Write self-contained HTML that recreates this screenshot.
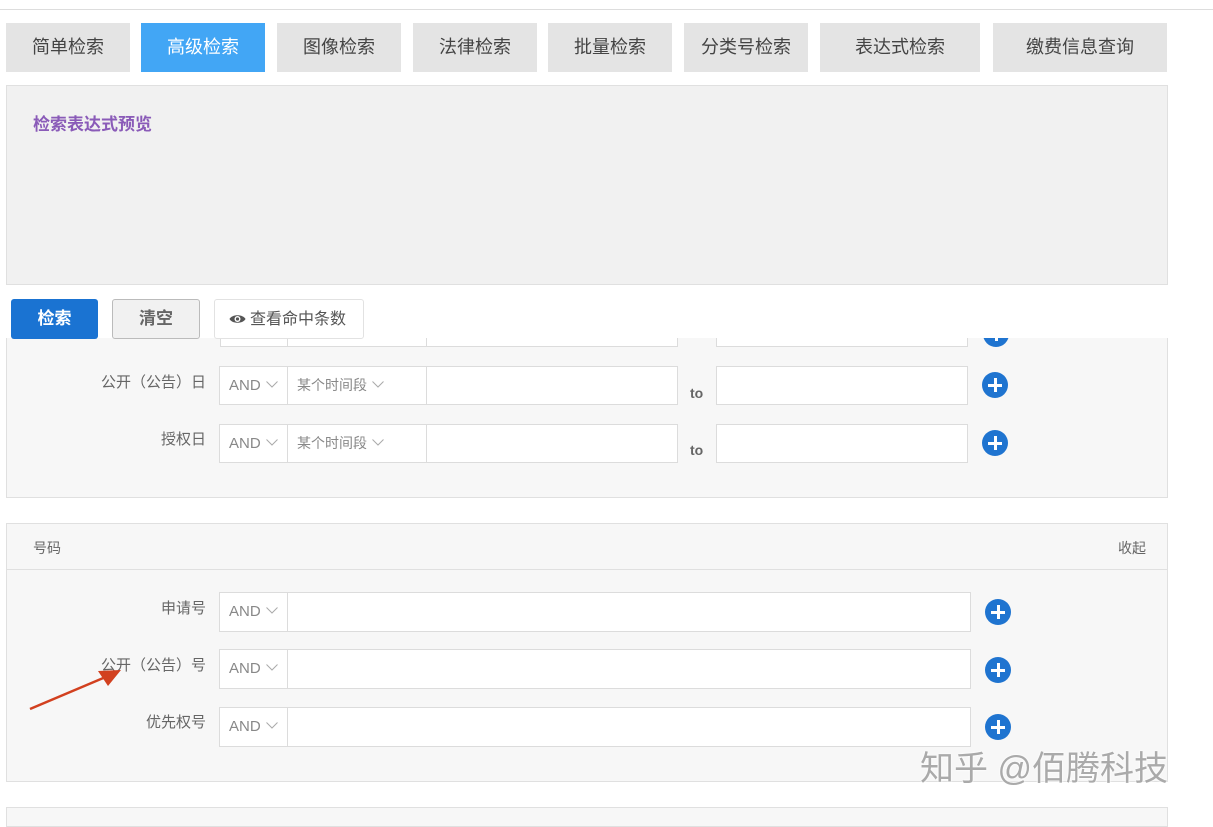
<!DOCTYPE html>
<html><head><meta charset="utf-8"><style>
*{box-sizing:border-box;margin:0;padding:0}
body{width:1213px;height:815px;overflow:hidden;background:#fff;font-family:"Liberation Sans","Noto Sans CJK SC",sans-serif;position:relative;color:#555}
.a{position:absolute}
.tab{position:absolute;top:23px;height:49px;background:#e4e4e4;color:#444;font-size:18px;line-height:49px;text-align:center}
.tab.on{background:#42a6f5;color:#fff}
.box{position:absolute;background:#fff;border:1px solid #dcdcdc}
.lbl{position:absolute;font-size:15px;color:#666;text-align:right;width:200px;left:6px}
.and{font-size:15px;color:#888;line-height:37px;padding-left:9px}
.and svg{margin-left:5px;vertical-align:2px}
.plus{position:absolute;width:26px;height:26px;border-radius:50%;background:#1f74d0}
.plus:before{content:"";position:absolute;left:6px;top:11.5px;width:14px;height:3px;background:#fff}
.plus:after{content:"";position:absolute;left:11.5px;top:6px;width:3px;height:14px;background:#fff}
.to{position:absolute;font-size:14px;font-weight:bold;color:#666}
</style></head><body>
<div class="a" style="left:0;top:9px;width:1213px;height:1px;background:#ddd"></div>
<div class="tab" style="left:6px;width:124px">简单检索</div>
<div class="tab on" style="left:141px;width:124px">高级检索</div>
<div class="tab" style="left:277px;width:124px">图像检索</div>
<div class="tab" style="left:413px;width:124px">法律检索</div>
<div class="tab" style="left:548px;width:124px">批量检索</div>
<div class="tab" style="left:684px;width:124px">分类号检索</div>
<div class="tab" style="left:820px;width:160px">表达式检索</div>
<div class="tab" style="left:993px;width:174px">缴费信息查询</div>

<div class="a" style="left:6px;top:85px;width:1162px;height:200px;background:#f1f1f1;border:1px solid #e0e0e0"></div>
<div class="a" style="left:33px;top:110px;font-size:17px;font-weight:bold;color:#8a5bb8">检索表达式预览</div>

<div class="a" style="left:6px;top:338px;width:1162px;height:160px;background:#f7f7f7;border:1px solid #e0e0e0;border-top:none;overflow:hidden">
  <div class="box" style="left:213px;top:-29px;width:68px;height:38px"></div>
  <div class="box" style="left:280px;top:-29px;width:140px;height:38px"></div>
  <div class="box" style="left:419px;top:-29px;width:252px;height:38px"></div>
  <div class="box" style="left:709px;top:-29px;width:252px;height:38px"></div>
  <div class="plus" style="left:976px;top:-17px"></div>
</div>
<div class="lbl" style="top:371px">公开（公告）日</div>
<div class="box and" style="left:219px;top:366px;width:69px;height:39px">AND<svg width="12" height="7"><path d="M0.5 0.5L6 6L11.5 0.5" fill="none" stroke="#aaa"/></svg></div>
<div class="box and" style="left:287px;top:366px;width:140px;height:39px;font-size:14px">某个时间段<svg width="12" height="7"><path d="M0.5 0.5L6 6L11.5 0.5" fill="none" stroke="#aaa"/></svg></div>
<div class="box" style="left:426px;top:366px;width:252px;height:39px"></div>
<div class="to" style="left:690px;top:385px">to</div>
<div class="box" style="left:716px;top:366px;width:252px;height:39px"></div>
<div class="plus" style="left:982px;top:372px"></div>
<div class="lbl" style="top:428px">授权日</div>
<div class="box and" style="left:219px;top:424px;width:69px;height:39px">AND<svg width="12" height="7"><path d="M0.5 0.5L6 6L11.5 0.5" fill="none" stroke="#aaa"/></svg></div>
<div class="box and" style="left:287px;top:424px;width:140px;height:39px;font-size:14px">某个时间段<svg width="12" height="7"><path d="M0.5 0.5L6 6L11.5 0.5" fill="none" stroke="#aaa"/></svg></div>
<div class="box" style="left:426px;top:424px;width:252px;height:39px"></div>
<div class="to" style="left:690px;top:442px">to</div>
<div class="box" style="left:716px;top:424px;width:252px;height:39px"></div>
<div class="plus" style="left:982px;top:430px"></div>

<div class="a" style="left:11px;top:299px;width:87px;height:40px;background:#1a73d2;border-radius:3px;color:#fff;font-size:17px;font-weight:bold;text-align:center;line-height:40px">检索</div>
<div class="a" style="left:112px;top:299px;width:88px;height:40px;background:#f1f1f1;border:1px solid #bbb;border-radius:3px;color:#666;font-size:17px;font-weight:bold;text-align:center;line-height:38px">清空</div>
<div class="a" style="left:214px;top:299px;width:150px;height:40px;background:#fff;border:1px solid #e2e2e2;border-radius:3px;color:#555;font-size:16px;line-height:40px;padding-left:14px">
<svg width="17" height="12" viewBox="0 0 17 12" style="vertical-align:-1px;margin-right:4px"><path d="M0.5 6C3 1 14 1 16.5 6C14 11 3 11 0.5 6Z" fill="#555"/><circle cx="8.5" cy="6" r="3" fill="#fff"/><circle cx="8.5" cy="6" r="1.6" fill="#555"/></svg>查看命中条数</div>

<div class="a" style="left:6px;top:523px;width:1162px;height:259px;background:#f7f7f7;border:1px solid #e0e0e0"></div>
<div class="a" style="left:6px;top:569px;width:1162px;height:1px;background:#e0e0e0"></div>
<div class="a" style="left:33px;top:538px;font-size:14px;color:#666">号码</div>
<div class="a" style="left:1118px;top:538px;font-size:14px;color:#666">收起</div>
<div class="lbl" style="top:597px">申请号</div>
<div class="box and" style="left:219px;top:592px;width:69px;height:40px">AND<svg width="12" height="7"><path d="M0.5 0.5L6 6L11.5 0.5" fill="none" stroke="#aaa"/></svg></div>
<div class="box" style="left:287px;top:592px;width:684px;height:40px"></div>
<div class="plus" style="left:985px;top:599px"></div>
<div class="lbl" style="top:654px">公开（公告）号</div>
<div class="box and" style="left:219px;top:649px;width:69px;height:40px">AND<svg width="12" height="7"><path d="M0.5 0.5L6 6L11.5 0.5" fill="none" stroke="#aaa"/></svg></div>
<div class="box" style="left:287px;top:649px;width:684px;height:40px"></div>
<div class="plus" style="left:985px;top:657px"></div>
<div class="lbl" style="top:711px">优先权号</div>
<div class="box and" style="left:219px;top:707px;width:69px;height:40px">AND<svg width="12" height="7"><path d="M0.5 0.5L6 6L11.5 0.5" fill="none" stroke="#aaa"/></svg></div>
<div class="box" style="left:287px;top:707px;width:684px;height:40px"></div>
<div class="plus" style="left:985px;top:714px"></div>
<div class="a" style="left:6px;top:807px;width:1162px;height:20px;background:#f7f7f7;border:1px solid #e0e0e0"></div>

<svg class="a" style="left:0;top:0" width="1213" height="815"><line x1="30" y1="709" x2="108" y2="676" stroke="#d2401f" stroke-width="2.5"/><polygon points="121,670 98,671 108,686" fill="#d2401f"/></svg>
<div class="a" style="left:920px;top:741px;font-size:34px;color:#aaa;text-shadow:0 0 2px #fff,0 0 2px #fff">知乎 @佰腾科技</div>
</body></html>
